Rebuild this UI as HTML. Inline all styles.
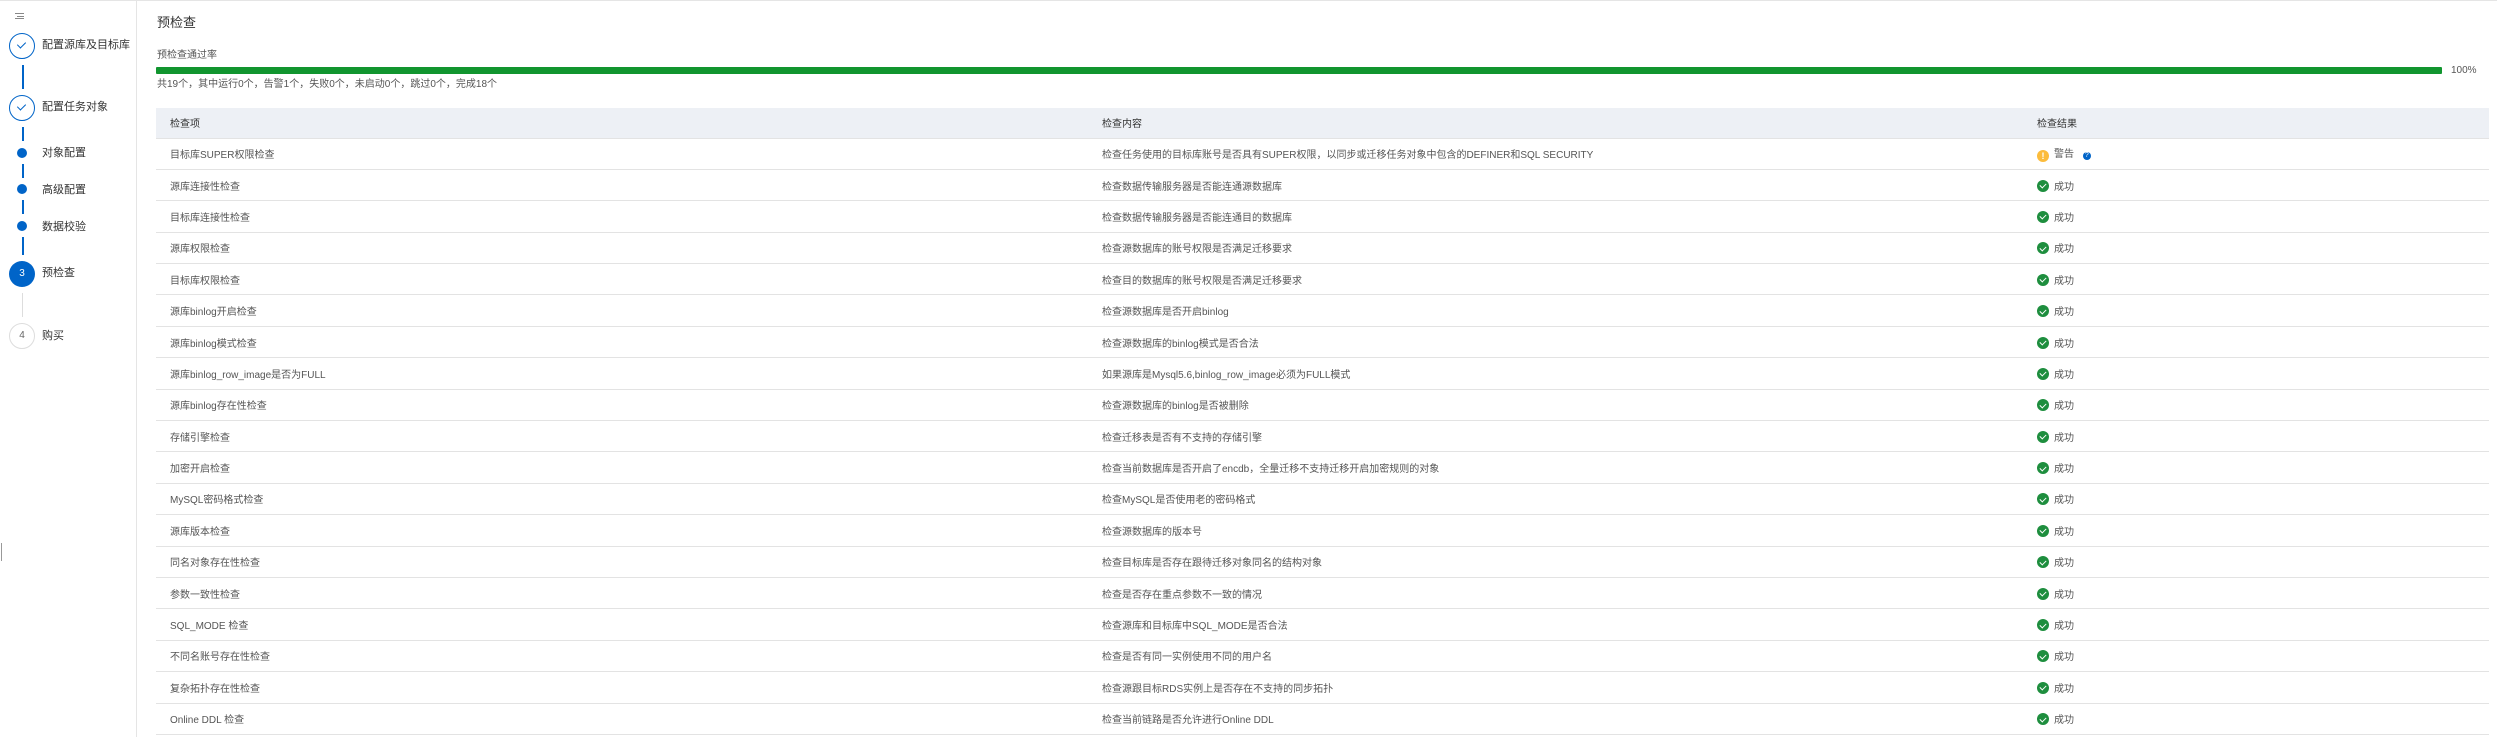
<!DOCTYPE html>
<html><head><meta charset="utf-8"><style>
*{margin:0;padding:0;box-sizing:border-box}
body{width:2497px;height:737px;background:#fff;font-family:"Liberation Sans","Noto Sans CJK SC",sans-serif;color:#333;position:relative;overflow:hidden;font-size:10px}
.top{position:absolute;left:0;top:0;width:2497px;height:1px;background:#e5e5e5}
.side{position:absolute;left:0;top:0;width:137px;height:737px;border-right:1px solid #e5e5e5}
.vl{position:absolute;left:22px;width:1.5px;background:#0064c8}
.c{position:absolute;border-radius:50%}
.lbl{position:absolute;left:42px;font-size:11px;color:#333;line-height:14px;white-space:nowrap}
table{position:absolute;left:156px;top:108px;width:2333px;border-collapse:collapse;font-size:10px;table-layout:fixed}
th{background:#edf0f5;height:30px;text-align:left;font-weight:normal;color:#333;border-bottom:1px solid #e3e3e3;padding-left:14px}
td{height:31.4px;border-bottom:1px solid #e3e3e3;padding-left:14px;color:#555;white-space:nowrap}
.ok{display:inline-block;width:12px;height:12px;border-radius:50%;background:#1e8e3e;vertical-align:-2px;margin-right:5px;position:relative}
.ok:after{content:"";position:absolute;left:4px;top:2.5px;width:3px;height:5px;border:solid #fff;border-width:0 1.6px 1.6px 0;transform:rotate(45deg)}
</style></head><body>
<div class="top"></div>
<div class="side">
<div style="position:absolute;left:15px;top:13px;width:9px;height:6px;border-top:1px solid #888;border-bottom:1px solid #888"></div>
<div style="position:absolute;left:17px;top:16px;width:7px;height:1px;background:#888"></div>
<div class="c" style="left:9px;top:33px;width:26px;height:26px;border:1.5px solid #0064c8"></div>
<div style="position:absolute;left:19px;top:40px;width:5px;height:8px;border:solid #0064c8;border-width:0 1.5px 1.5px 0;transform:rotate(45deg)"></div>
<div class="lbl" style="top:38px">配置源库及目标库</div>
<div class="vl" style="top:65px;height:24px"></div>
<div class="c" style="left:9px;top:95px;width:26px;height:26px;border:1.5px solid #0064c8"></div>
<div style="position:absolute;left:19px;top:102px;width:5px;height:8px;border:solid #0064c8;border-width:0 1.5px 1.5px 0;transform:rotate(45deg)"></div>
<div class="lbl" style="top:100px">配置任务对象</div>
<div class="vl" style="top:127px;height:14px"></div>
<div class="c" style="left:17px;top:148px;width:10px;height:10px;background:#0064c8"></div>
<div class="lbl" style="top:146px">对象配置</div>
<div class="vl" style="top:164px;height:14px"></div>
<div class="c" style="left:17px;top:184px;width:10px;height:10px;background:#0064c8"></div>
<div class="lbl" style="top:183px">高级配置</div>
<div class="vl" style="top:200px;height:14px"></div>
<div class="c" style="left:17px;top:221px;width:10px;height:10px;background:#0064c8"></div>
<div class="lbl" style="top:220px">数据校验</div>
<div class="vl" style="top:237px;height:18px"></div>
<div class="c" style="left:9px;top:261px;width:26px;height:26px;background:#0064c8;color:#fff;font-size:10px;text-align:center;line-height:26px">3</div>
<div class="lbl" style="top:266px">预检查</div>
<div class="vl" style="top:293px;height:24px;background:#ddd;width:1px"></div>
<div class="c" style="left:9px;top:323px;width:26px;height:26px;border:1px solid #ddd;color:#666;font-size:10px;text-align:center;line-height:24px">4</div>
<div class="lbl" style="top:329px">购买</div>
</div>
<div style="position:absolute;left:1px;top:543px;width:1px;height:18px;background:#999"></div>
<div style="position:absolute;left:157px;top:15px;font-size:13px;line-height:16px;color:#333">预检查</div>
<div style="position:absolute;left:157px;top:49px;font-size:10px;line-height:13px;color:#555">预检查通过率</div>
<div style="position:absolute;left:156px;top:67px;width:2286px;height:7px;background:#11952f;border-radius:1px"></div>
<div style="position:absolute;left:2451px;top:64px;font-size:10px;line-height:13px;color:#555">100%</div>
<div style="position:absolute;left:157px;top:78px;font-size:10px;line-height:13px;color:#555">共19个，其中运行0个，告警1个，失败0个，未启动0个，跳过0个，完成18个</div>
<table>
<tr><th style="width:932px">检查项</th><th style="width:935px">检查内容</th><th>检查结果</th></tr>
<tr><td>目标库SUPER权限检查</td><td>检查任务使用的目标库账号是否具有SUPER权限，以同步或迁移任务对象中包含的DEFINER和SQL SECURITY</td><td><span class="c" style="position:relative;display:inline-block;width:12px;height:12px;background:#fcbc3c;color:#fff;font-size:9px;font-weight:bold;text-align:center;line-height:12px;vertical-align:-2px;margin-right:5px">!</span>警告 <span class="c" style="position:relative;display:inline-block;width:8px;height:8px;background:#0064c8;color:#fff;font-size:7px;text-align:center;line-height:8px;margin-left:6px;vertical-align:0">?</span></td></tr>
<tr><td>源库连接性检查</td><td>检查数据传输服务器是否能连通源数据库</td><td><span class="ok"></span>成功</td></tr>
<tr><td>目标库连接性检查</td><td>检查数据传输服务器是否能连通目的数据库</td><td><span class="ok"></span>成功</td></tr>
<tr><td>源库权限检查</td><td>检查源数据库的账号权限是否满足迁移要求</td><td><span class="ok"></span>成功</td></tr>
<tr><td>目标库权限检查</td><td>检查目的数据库的账号权限是否满足迁移要求</td><td><span class="ok"></span>成功</td></tr>
<tr><td>源库binlog开启检查</td><td>检查源数据库是否开启binlog</td><td><span class="ok"></span>成功</td></tr>
<tr><td>源库binlog模式检查</td><td>检查源数据库的binlog模式是否合法</td><td><span class="ok"></span>成功</td></tr>
<tr><td>源库binlog_row_image是否为FULL</td><td>如果源库是Mysql5.6,binlog_row_image必须为FULL模式</td><td><span class="ok"></span>成功</td></tr>
<tr><td>源库binlog存在性检查</td><td>检查源数据库的binlog是否被删除</td><td><span class="ok"></span>成功</td></tr>
<tr><td>存储引擎检查</td><td>检查迁移表是否有不支持的存储引擎</td><td><span class="ok"></span>成功</td></tr>
<tr><td>加密开启检查</td><td>检查当前数据库是否开启了encdb，全量迁移不支持迁移开启加密规则的对象</td><td><span class="ok"></span>成功</td></tr>
<tr><td>MySQL密码格式检查</td><td>检查MySQL是否使用老的密码格式</td><td><span class="ok"></span>成功</td></tr>
<tr><td>源库版本检查</td><td>检查源数据库的版本号</td><td><span class="ok"></span>成功</td></tr>
<tr><td>同名对象存在性检查</td><td>检查目标库是否存在跟待迁移对象同名的结构对象</td><td><span class="ok"></span>成功</td></tr>
<tr><td>参数一致性检查</td><td>检查是否存在重点参数不一致的情况</td><td><span class="ok"></span>成功</td></tr>
<tr><td>SQL_MODE 检查</td><td>检查源库和目标库中SQL_MODE是否合法</td><td><span class="ok"></span>成功</td></tr>
<tr><td>不同名账号存在性检查</td><td>检查是否有同一实例使用不同的用户名</td><td><span class="ok"></span>成功</td></tr>
<tr><td>复杂拓扑存在性检查</td><td>检查源跟目标RDS实例上是否存在不支持的同步拓扑</td><td><span class="ok"></span>成功</td></tr>
<tr><td>Online DDL 检查</td><td>检查当前链路是否允许进行Online DDL</td><td><span class="ok"></span>成功</td></tr>
</table>
</body></html>
